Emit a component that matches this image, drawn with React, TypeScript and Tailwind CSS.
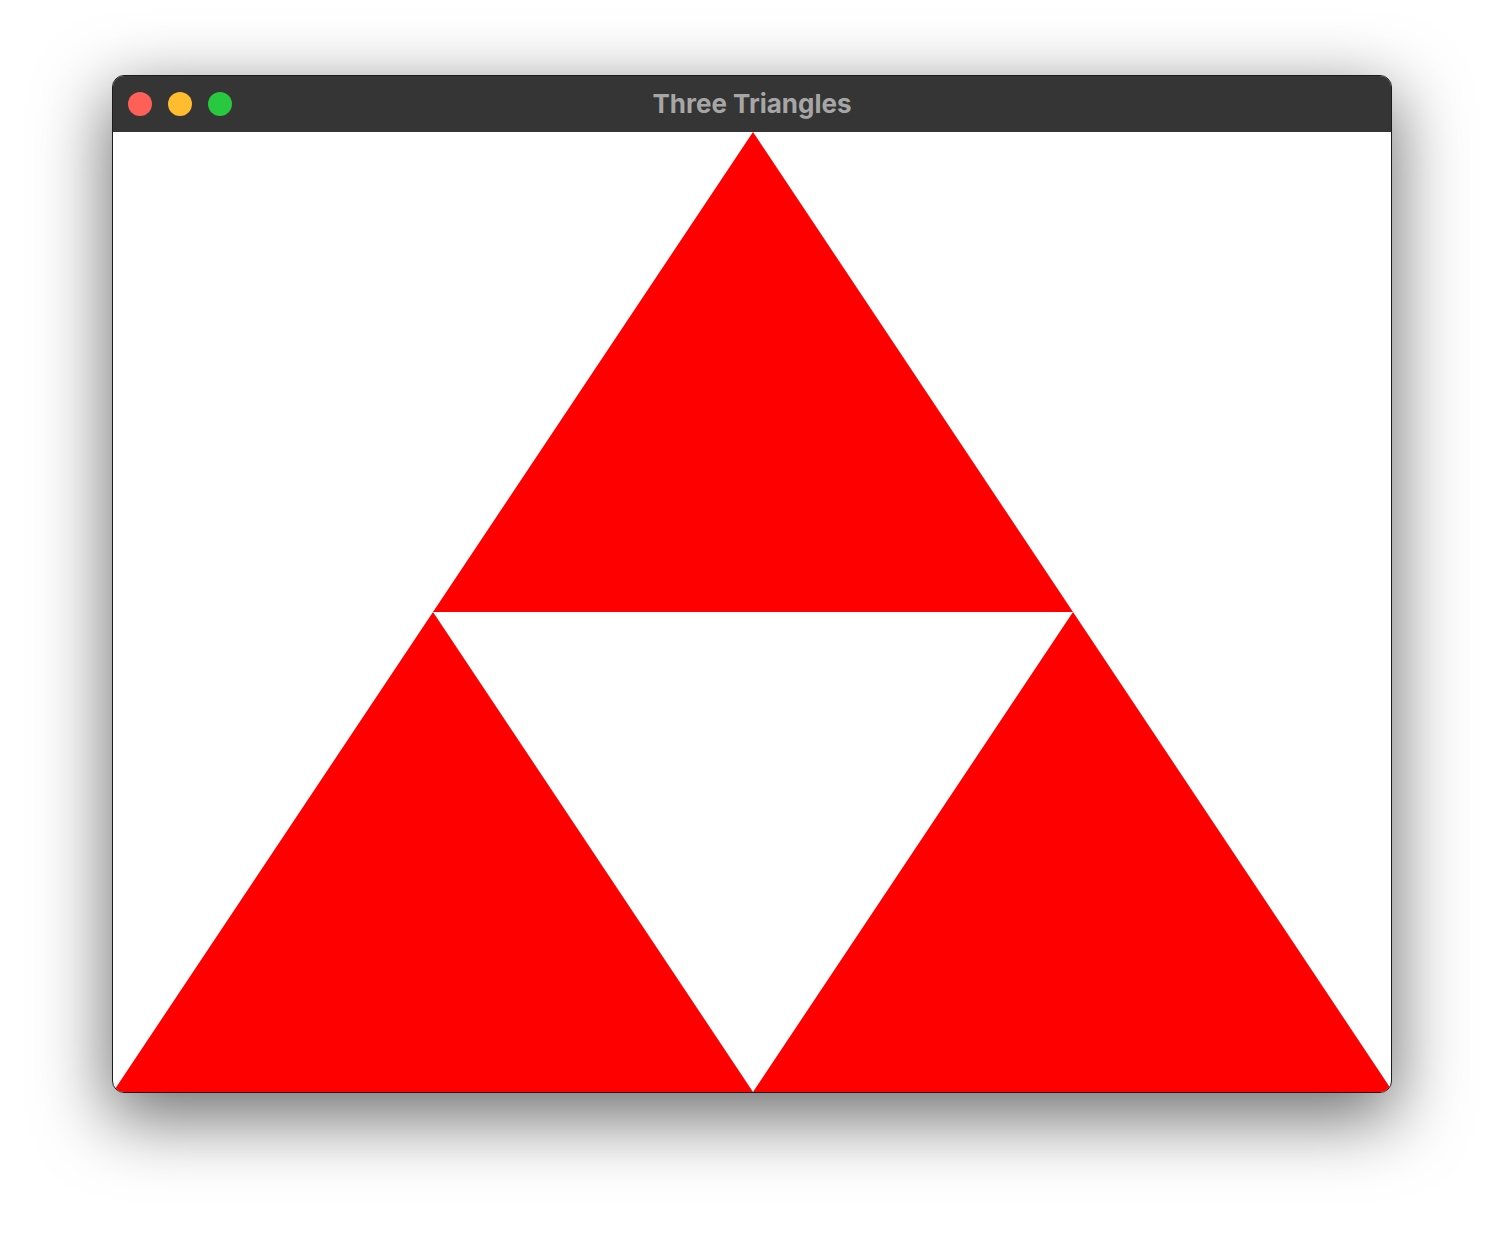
export default function App() {
  return (
    <div className="min-h-[1240px] w-[1504px] bg-white pl-[112px] pt-[75px]">
      <div className="w-[1280px] overflow-hidden rounded-[12px] border border-[#1c1c1c] bg-white shadow-[0_22px_70px_4px_rgba(0,0,0,0.56)]">
        {/* Title bar */}
        <div className="grid h-[56px] grid-cols-[1fr_auto_1fr] items-center bg-[#353535] px-[15px] pb-[1px]">
          <div className="flex gap-[16px]">
            <span className="h-[24px] w-[24px] rounded-full bg-[#fe5f57]" />
            <span className="h-[24px] w-[24px] rounded-full bg-[#febc2e]" />
            <span className="h-[24px] w-[24px] rounded-full bg-[#28c840]" />
          </div>
          <span className="text-[26px] font-bold leading-none text-[#a6a6a6] [font-family:Inter,'Liberation_Sans',sans-serif]">
            Three Triangles
          </span>
          <div />
        </div>
        {/* Canvas */}
        <svg width="1280" height="960" viewBox="0 0 1280 960" className="block">
          <polygon points="640,0 320,480 960,480" fill="#fe0000" />
          <polygon points="320,480 0,960 640,960" fill="#fe0000" />
          <polygon points="960,480 640,960 1280,960" fill="#fe0000" />
        </svg>
      </div>
    </div>
  )
}
